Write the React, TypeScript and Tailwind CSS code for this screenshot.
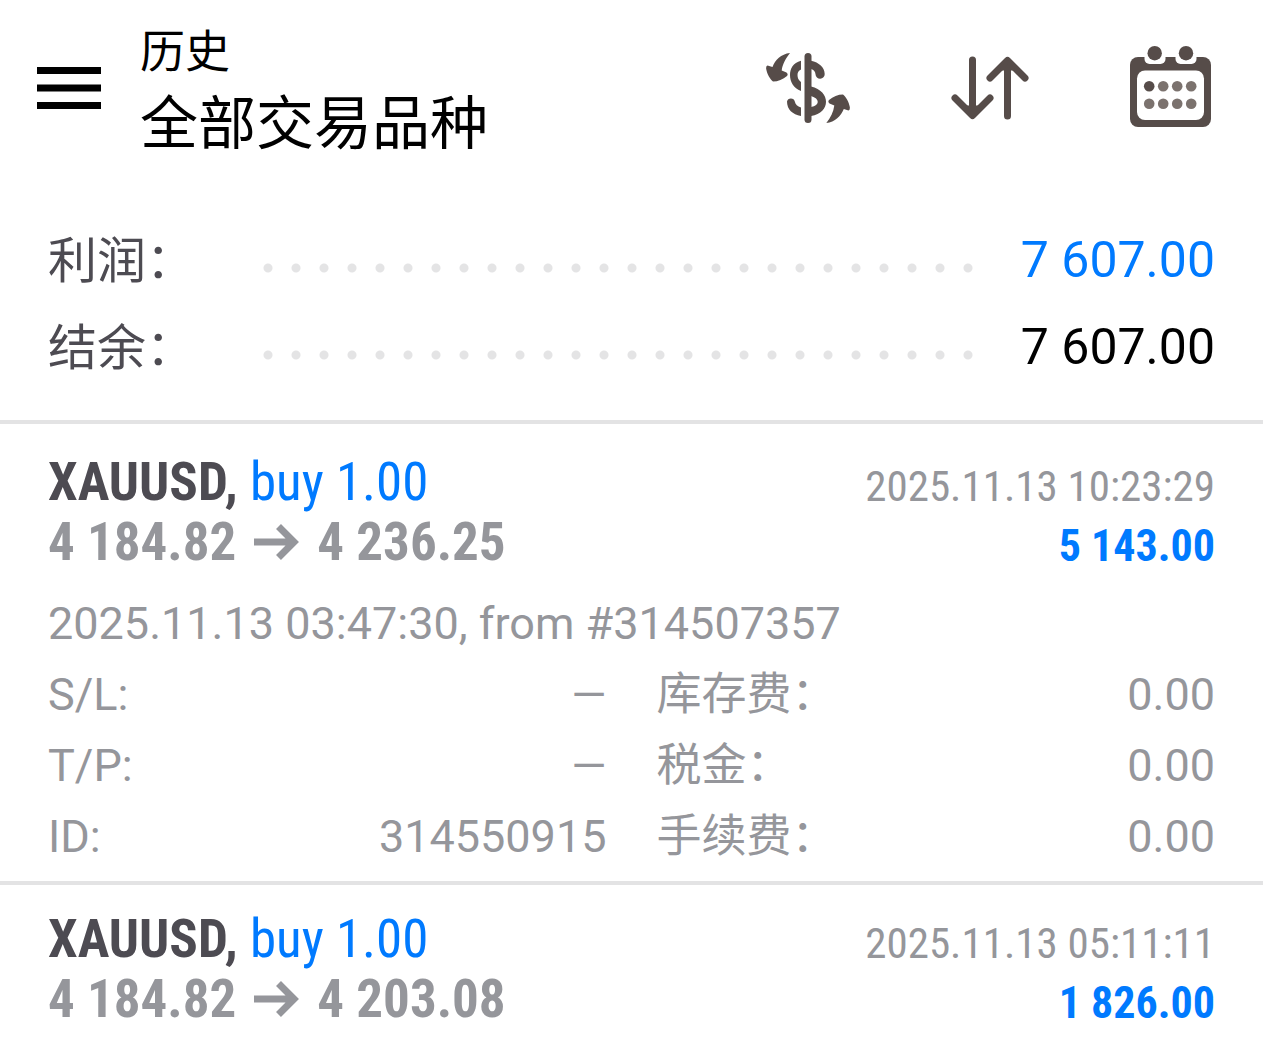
import type { ReactNode } from "react";

type Detail = { label: string; value: string };

type Deal = {
  symbol: string;
  action: string;
  open: string;
  close: string;
  time: string;
  profit: string;
  note?: string;
  left?: Detail[];
  right?: Detail[];
};

const deals: Deal[] = [
  {
    symbol: "XAUUSD,",
    action: "buy 1.00",
    open: "4 184.82",
    close: "4 236.25",
    time: "2025.11.13 10:23:29",
    profit: "5 143.00",
    note: "2025.11.13 03:47:30, from #314507357",
    left: [
      { label: "S/L:", value: "—" },
      { label: "T/P:", value: "—" },
      { label: "ID:", value: "314550915" },
    ],
    right: [
      { label: "库存费：", value: "0.00" },
      { label: "税金：", value: "0.00" },
      { label: "手续费：", value: "0.00" },
    ],
  },
  {
    symbol: "XAUUSD,",
    action: "buy 1.00",
    open: "4 184.82",
    close: "4 203.08",
    time: "2025.11.13 05:11:11",
    profit: "1 826.00",
  },
];

function MenuIcon() {
  return (
    <svg width="64" height="42" viewBox="0 0 64 42" fill="currentColor" aria-hidden="true">
      <rect width="64" height="7" />
      <rect y="17.5" width="64" height="7" />
      <rect y="35" width="64" height="7" />
    </svg>
  );
}

function CurrencyIcon() {
  return (
    <svg width="84" height="72" viewBox="0 0 84 72" fill="none" aria-hidden="true">
      <path
        d="M24 1C15 2 9 8 6.500 15L1.500 13.500Q-.2 14 .2 17C1 22 4 27 7 29.500C12 29.500 17 27.500 21 24Q22.500 22 20.500 20.500L15.700 18.500C16.500 12 20 6 24 1Z"
        fill="currentColor"
      />
      <path
        d="M60.300 71C69 70 75 64 77.800 57L82.500 58.500Q84.200 58 83.800 55C83 50 80 45 77 42.500C72 42.500 67 44.500 63 48Q61.500 50 63.500 51.500L68.300 53.500C67.500 60 64.500 66 60.300 71Z"
        fill="currentColor"
      />
      <path d="M35 8.700C27 11 24 16.500 24 23C24 30 27.500 36 35 39V30C32.500 28 31.500 26 31.500 23C31.500 20.500 32.500 18.500 35 17.500Z" fill="currentColor" />
      <path d="M21 49.500A4 4 0 0 1 28.800 49.500C29.300 52.500 31.500 54.500 35 55.500V64C26.500 62.500 21 57.500 21 49.500Z" fill="currentColor" />
      <rect x="38.500" y="1" width="7" height="70" rx="3.500" fill="currentColor" />
      <path d="M45 8.700C53 10.500 58.500 15 58.700 22A4.600 4.600 0 0 1 49.500 22.300C49.300 19.500 48 18 45 17Z" fill="currentColor" />
      <path d="M45 34.500C65 39 65 61 45 64V55C54 53.500 54 46.500 45 44Z" fill="currentColor" />
    </svg>
  );
}

function SortIcon() {
  return (
    <svg
      width="78"
      height="64"
      viewBox="0 0 78 64"
      fill="none"
      stroke="currentColor"
      strokeWidth="7"
      strokeLinecap="round"
      strokeLinejoin="round"
      aria-hidden="true"
    >
      <path d="M21.500 4V58M4 42L21.500 59.500L39 42" />
      <path d="M56.500 60V6M39 22L56.500 4.500L74 22" />
      <path d="M15.500 51L21.500 58L27.500 51ZM50.500 13L56.500 6L62.500 13Z" fill="currentColor" strokeWidth="3" />
    </svg>
  );
}

function CalendarIcon() {
  return (
    <svg width="82" height="84" viewBox="0 0 82 84" aria-hidden="true">
      <rect y="11" width="81" height="70" rx="8" fill="currentColor" />
      <rect x="14.500" y="2" width="21" height="16" rx="5" fill="white" />
      <rect x="45.500" y="2" width="21" height="16" rx="5" fill="white" />
      <circle cx="24.700" cy="7.200" r="7.200" fill="currentColor" />
      <circle cx="56" cy="7.200" r="7.200" fill="currentColor" />
      <rect x="7" y="24.500" width="67" height="49.500" rx="8" fill="white" />
      {[19.2, 33.2, 47.2, 61.2].map((x) => (
        <g key={x} fill="#7b726e">
          <circle cx={x} cy="40.300" r="5.300" fill={x === 19.2 ? "#564c49" : "#7b726e"} />
          <circle cx={x} cy="57.800" r="5.300" />
        </g>
      ))}
    </svg>
  );
}

function ArrowIcon() {
  return (
    <svg width="45" height="36" viewBox="0 0 45 36" fill="none" stroke="currentColor" strokeWidth="7" aria-hidden="true">
      <path d="M0 18H39M24.500 2.500L40 18L24.500 33.500" />
    </svg>
  );
}

function IconButton({ label, children }: { label: string; children: ReactNode }) {
  return (
    <button type="button" aria-label={label} className="shrink-0 cursor-pointer">
      {children}
    </button>
  );
}

function SummaryRow({ label, value, tone }: { label: string; value: string; tone: string }) {
  return (
    <div className="flex h-[87px] items-center text-[50px]">
      <dt className="w-[206px] shrink-0 whitespace-nowrap pt-1 text-[49px] text-[#4d4b52]">{label}</dt>
      <div
        aria-hidden="true"
        className="mr-10 mt-4 h-3 grow bg-[radial-gradient(circle,#e4e4e5_4px,transparent_5px)] bg-[length:28px_12px] bg-repeat-x"
      />
      <dd className={`whitespace-nowrap pt-0.5 ${tone}`}>{value}</dd>
    </div>
  );
}

function DetailList({ items }: { items: Detail[] }) {
  return (
    <dl className="min-w-0 text-[45px]">
      {items.map((item) => (
        <div key={item.label} className="flex h-[71px] items-center justify-between">
          <dt className="whitespace-nowrap">{item.label}</dt>
          <dd>{item.value}</dd>
        </div>
      ))}
    </dl>
  );
}

function DealItem({ deal }: { deal: Deal }) {
  return (
    <li className="border-t-4 border-[#e3e3e4] px-12 pt-6 text-[#95969b] first:pt-7">
      <div className="flex justify-between font-['Roboto_Condensed',Roboto,sans-serif]">
        <div className="text-[53px] leading-[60px]">
          <p className="text-[#007aff]">
            <strong className="font-bold text-[#4d4b52]">{deal.symbol}</strong> {deal.action}
          </p>
          <p className="flex items-center gap-[18px] font-bold">
            <span>{deal.open}</span>
            <ArrowIcon />
            <span>{deal.close}</span>
          </p>
        </div>
        <div className="pt-1 text-right text-[44px] leading-[60px]">
          <p className="text-[43px]">{deal.time}</p>
          <p className="font-bold text-[#007aff]">{deal.profit}</p>
        </div>
      </div>
      {deal.note && <p className="mt-3 flex h-[71px] items-center text-[45px]">{deal.note}</p>}
      {deal.left && deal.right && (
        <div className="grid grid-cols-2 gap-[50px] pb-[9px]">
          <DetailList items={deal.left} />
          <DetailList items={deal.right} />
        </div>
      )}
    </li>
  );
}

export default function App() {
  return (
    <main className="overflow-x-hidden bg-white font-[Roboto,'Noto_Sans_CJK_SC',sans-serif] text-black">
      <header className="flex items-center pl-[37px] pr-[51px] pt-[14px]">
        <IconButton label="菜单">
          <MenuIcon />
        </IconButton>
        <div className="ml-[39px] grow pt-1.5">
          <p className="text-[45px] leading-[66px]">历史</p>
          <h1 className="text-[58px] font-normal leading-[76px]">全部交易品种</h1>
        </div>
        <div className="flex items-center gap-[101px] text-[#564c49]">
          <IconButton label="货币">
            <CurrencyIcon />
          </IconButton>
          <IconButton label="排序">
            <SortIcon />
          </IconButton>
          <IconButton label="日期">
            <CalendarIcon />
          </IconButton>
        </div>
      </header>
      <dl className="px-12 pb-[30px] pt-[54px]">
        <SummaryRow label="利润：" value="7 607.00" tone="text-[#007aff]" />
        <SummaryRow label="结余：" value="7 607.00" tone="text-black" />
      </dl>
      <ul>
        {deals.map((deal) => (
          <DealItem key={deal.time} deal={deal} />
        ))}
      </ul>
    </main>
  );
}
